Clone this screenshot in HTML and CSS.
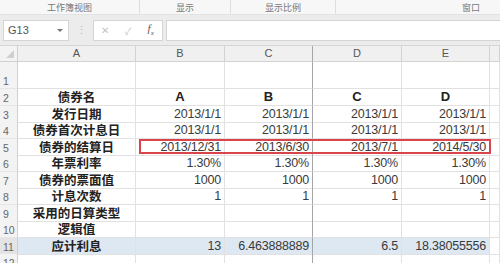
FILE: index.html
```html
<!DOCTYPE html>
<html lang="zh-CN">
<head>
  <meta charset="UTF-8">
  <title>债券应计利息</title>
  <link rel="stylesheet" href="styles.css">
</head>
<body>
  <div class="ribbon">
    <div class="group g1">工作簿视图</div>
    <div class="group g2">显示</div>
    <div class="group g3">显示比例</div>
    <div class="group g4">窗口</div>
  </div>

  <div class="toolbar">
    <div class="namebox">G13<span class="caret"></span></div>
    <div class="dots">⋮</div>
    <div class="fxbox">
      <span class="ic x">✕</span>
      <span class="ic ok">✓</span>
      <span class="ic fx">f<sub>x</sub></span>
    </div>
    <div class="input"></div>
  </div>

  <div class="sheet">
    <div class="row colhead">
      <div class="rh corner"><span class="tri"></span></div>
      <div class="c">A</div><div class="c">B</div><div class="c split">C</div>
      <div class="c">D</div><div class="c">E</div><div class="c"></div>
    </div>
    <div class="row tall">
      <div class="rh">1</div>
      <div class="c"></div><div class="c"></div><div class="c split"></div>
      <div class="c"></div><div class="c"></div><div class="c"></div>
    </div>
    <div class="row">
      <div class="rh">2</div>
      <div class="c name">债券名</div><div class="c title">A</div><div class="c title split">B</div>
      <div class="c title">C</div><div class="c title">D</div><div class="c"></div>
    </div>
    <div class="row">
      <div class="rh">3</div>
      <div class="c name">发行日期</div><div class="c num">2013/1/1</div><div class="c num split">2013/1/1</div>
      <div class="c num">2013/1/1</div><div class="c num">2013/1/1</div><div class="c"></div>
    </div>
    <div class="row">
      <div class="rh">4</div>
      <div class="c name">债券首次计息日</div><div class="c num">2013/1/1</div><div class="c num split">2013/1/1</div>
      <div class="c num">2013/1/1</div><div class="c num">2013/1/1</div><div class="c"></div>
    </div>
    <div class="row marked">
      <div class="rh">5</div>
      <div class="c name">债券的结算日</div><div class="c num">2013/12/31</div><div class="c num split">2013/6/30</div>
      <div class="c num">2013/7/1</div><div class="c num">2014/5/30</div><div class="c"></div>
      <span class="redbox"></span>
    </div>
    <div class="row">
      <div class="rh">6</div>
      <div class="c name">年票利率</div><div class="c num">1.30%</div><div class="c num split">1.30%</div>
      <div class="c num">1.30%</div><div class="c num">1.30%</div><div class="c"></div>
    </div>
    <div class="row">
      <div class="rh">7</div>
      <div class="c name">债券的票面值</div><div class="c num">1000</div><div class="c num split">1000</div>
      <div class="c num">1000</div><div class="c num">1000</div><div class="c"></div>
    </div>
    <div class="row">
      <div class="rh">8</div>
      <div class="c name">计息次数</div><div class="c num">1</div><div class="c num split">1</div>
      <div class="c num">1</div><div class="c num">1</div><div class="c"></div>
    </div>
    <div class="row">
      <div class="rh">9</div>
      <div class="c name">采用的日算类型</div><div class="c"></div><div class="c split"></div>
      <div class="c"></div><div class="c"></div><div class="c"></div>
    </div>
    <div class="row">
      <div class="rh">10</div>
      <div class="c name">逻辑值</div><div class="c"></div><div class="c split"></div>
      <div class="c"></div><div class="c"></div><div class="c"></div>
    </div>
    <div class="row selected">
      <div class="rh">11</div>
      <div class="c name">应计利息</div><div class="c num">13</div><div class="c num split">6.463888889</div>
      <div class="c num">6.5</div><div class="c num">18.38055556</div><div class="c plain"></div>
    </div>
    <div class="row">
      <div class="rh">12</div>
      <div class="c"></div><div class="c"></div><div class="c split"></div>
      <div class="c"></div><div class="c"></div><div class="c"></div>
    </div>
  </div>
</body>
</html>
```

FILE: styles.css
```css
/* Page */
body {
  margin: 0;
  width: 500px;
  height: 263px;
  overflow: hidden;
  background: #fff;
  font-family: "Liberation Sans", "Noto Sans CJK SC", sans-serif;
  color: #333;
}

/* Ribbon group captions */
.ribbon {
  display: flex;
  height: 14px;
  background: #f7f7f7;
  border-bottom: 1px solid #e2e2e2;
  font-family: "Noto Sans CJK SC", sans-serif;
  font-size: 9px;
  color: #777;
}
.group {
  display: flex;
  align-items: center;
  justify-content: center;
  border-right: 1px solid #dedede;
}
.g1 { width: 139px; }
.g2 { width: 90px; }
.g3 { width: 104px; }
.g4 { flex: 1; border-right: none; justify-content: flex-end; padding-right: 20px; }

/* Name box + formula bar */
.toolbar {
  display: flex;
  align-items: center;
  gap: 3px;
  height: 30px;
  padding: 0 0 0 3px;
  background: #ececec;
}
.namebox {
  position: relative;
  width: 66px;
  height: 21px;
  box-sizing: border-box;
  background: #fff;
  border: 1px solid #d4d4d4;
  font-size: 11px;
  line-height: 19px;
  padding-left: 4px;
  color: #555;
}
.caret {
  position: absolute;
  right: 5px;
  top: 8px;
  border-left: 3px solid transparent;
  border-right: 3px solid transparent;
  border-top: 3px solid #777;
}
.dots {
  width: 18px;
  text-align: center;
  color: #bbb;
  font-size: 11px;
}
.fxbox {
  display: flex;
  align-items: center;
  width: 70px;
  height: 21px;
  box-sizing: border-box;
  background: #fff;
  border: 1px solid #d4d4d4;
}
.ic {
  flex: 1;
  text-align: center;
  font-size: 10px;
  color: #c4c4c4;
}
.ic.fx {
  font-family: "Liberation Serif", serif;
  font-style: italic;
  font-size: 11px;
  color: #555;
}
.ic.fx sub { font-size: 7px; }
.input {
  flex: 1;
  height: 21px;
  box-sizing: border-box;
  background: #fff;
  border: 1px solid #d4d4d4;
  border-right: none;
}

/* Grid */
.sheet {
  border-top: 1px solid #d6d6d6;
}
.row {
  position: relative;
  display: grid;
  grid-template-columns: 18px 118px 89px 88px 89px 88px 1fr;
  height: 16.5px;
}
.row.tall { height: 27px; }
.rh, .c {
  box-sizing: border-box;
  border-right: 1px solid #e1e1e1;
  border-bottom: 1px solid #e1e1e1;
  white-space: nowrap;
}
.c.split { border-right-color: #a6a6a6; }
.rh {
  background: #f3f3f3;
  border-right-color: #d0d0d0;
  border-bottom-color: #e6e6e6;
  color: #666;
  font-size: 10.5px;
  padding-left: 3px;
  display: flex;
  align-items: flex-end;
  padding-bottom: 1px;
}

.colhead { height: 16px; }
.colhead .c {
  background: #f0f0f0;
  border-right-color: #d2d2d2;
  border-bottom-color: #d2d2d2;
  text-align: center;
  font-size: 11px;
  line-height: 15px;
  color: #555;
}
.colhead .c.split { border-right-color: #a6a6a6; }
.corner { position: relative; border-bottom-color: #d2d2d2; }
.tri {
  position: absolute;
  right: 3px;
  bottom: 3px;
  border-left: 8px solid transparent;
  border-bottom: 8px solid #cfcfcf;
}

.name {
  text-align: center;
  font-family: "Noto Sans CJK SC", sans-serif;
  font-weight: bold;
  font-size: 12.5px;
  line-height: 16px;
  color: #222;
}
.title {
  text-align: center;
  font-weight: bold;
  font-size: 13px;
  line-height: 16px;
  color: #222;
}
.num {
  text-align: right;
  padding-right: 3px;
  font-size: 12.5px;
  line-height: 16px;
  letter-spacing: -0.2px;
  color: #3a3a3a;
}

.selected .c { background: #dde8f3; }
.selected .c.plain { background: #fff; }
.selected .rh { background: #e4e4e4; }

/* Annotation box on row 5 */
.redbox {
  position: absolute;
  left: 139px;
  top: 0;
  width: 352px;
  height: 15px;
  box-sizing: border-box;
  border: 2px solid #d9454a;
  pointer-events: none;
}
```
